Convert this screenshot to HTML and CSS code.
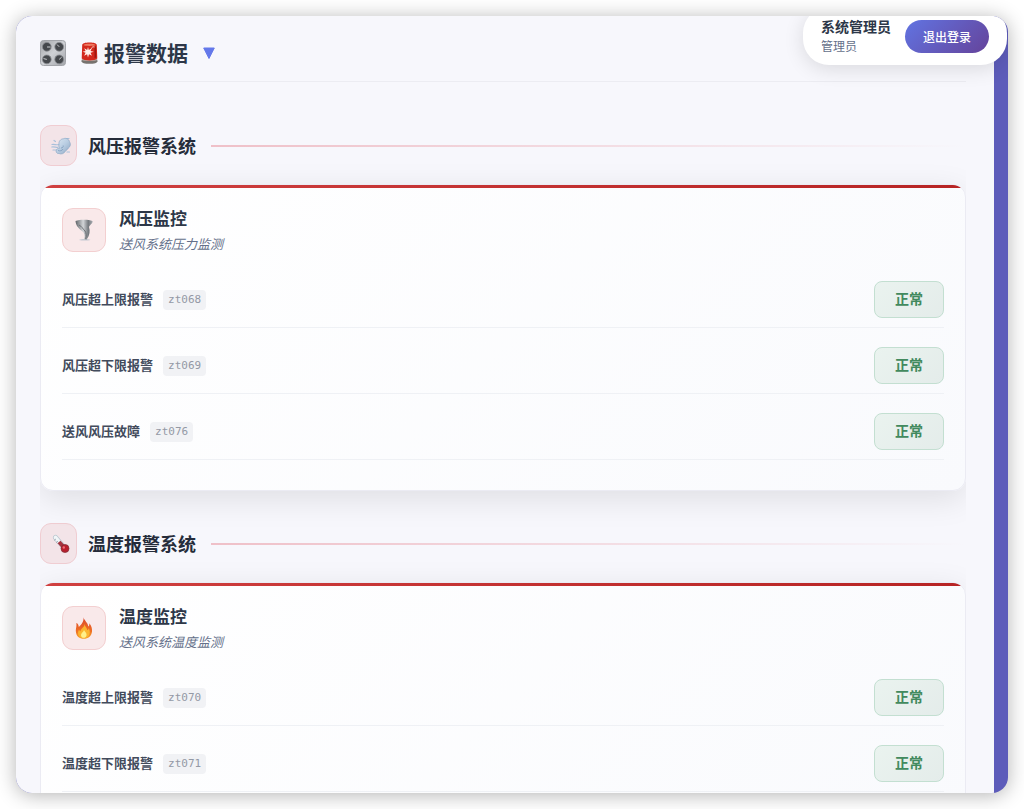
FILE: index.html
```html
<!DOCTYPE html>
<html lang="zh-CN">
<head>
  <meta charset="UTF-8" />
  <meta name="viewport" content="width=device-width, initial-scale=1" />
  <title>报警数据</title>
  <link rel="stylesheet" href="styles.css">
</head>
<body>

  <div class="window">

    <!-- 用户信息 -->
    <div class="user-bar">
      <div class="user-text">
        <span class="user-name">系统管理员</span>
        <span class="user-role">管理员</span>
      </div>
      <button class="logout-btn" type="button">退出登录</button>
    </div>

    <main class="panel">
      <!-- 页面标题 -->
      <header class="page-header">
        <svg class="icon-knobs" viewBox="0 0 26 26" aria-hidden="true">
          <defs>
            <linearGradient id="plate" x1="0" y1="0" x2="1" y2="1">
              <stop offset="0" stop-color="#a3a5a8" />
              <stop offset="0.5" stop-color="#cfd1d5" />
              <stop offset="1" stop-color="#a2a4a9" />
            </linearGradient>
          </defs>
          <rect x="0.5" y="0.5" width="25" height="25" rx="3" fill="url(#plate)" stroke="#a3a5aa" />
          <g fill="#45484c" stroke="#8a8d92" stroke-width="0.8">
            <circle cx="6.800" cy="6.800" r="4.400" />
            <circle cx="19.200" cy="6.800" r="4.400" />
            <circle cx="6.800" cy="19.400" r="4.400" />
            <circle cx="19.200" cy="19.400" r="4.400" />
          </g>
          <path d="M7 7h3.500M19.200 6.800l-2.200-2.300M6.800 19.400l-3.300-.8M19.200 19.400l2.500-2.300" stroke="#c9cbce" stroke-width="1" />
        </svg>
        <h1 class="page-title">
          <svg class="icon-siren" viewBox="0 0 17 22" aria-hidden="true">
            <path d="M1 17h15l.6 2.200c0 1.600-3.600 2.600-8.100 2.600S.4 20.800.4 19.200z" fill="#77736f" />
            <path d="M1 17h15v1c-1.500 1.400-13.500 1.400-15 0z" fill="#b9aaa4" />
            <path d="M1.200 3C1.200 1.200 4 .4 8.500.4s7.300.8 7.300 2.600l.5 13.500c-1.800 2.600-13.800 2.600-15.600 0z" fill="#d3281c" />
            <path d="M2.500 3c1-1.600 11-1.600 12 0-1 1.200-11 1.200-12 0z" fill="#ee7a62" />
            <path d="M13.500 5v11l1.800-.6L15 4z" fill="#9f160f" />
            <path d="M7 5l.8 3L11 6 9.500 9l3.300.8-3.300 1 1.500 3-3-1.500-1 3.200-.9-3.200-3 1.500 1.500-3-3-1 3-.9L3.200 6.200l3 1.800z" fill="#fff0ea" />
            <path d="M10.500 6.500c.3-1.500 1.500-2 3-1.500" fill="none" stroke="#ffd9cc" stroke-width="0.9" />
          </svg>
          <span class="title-text">报警数据</span>
        </h1>
        <button class="toggle-btn" type="button" aria-label="展开">
          <svg viewBox="0 0 12 12" aria-hidden="true"><path d="M.7 1h10.600L6 11.500z" fill="#6478ea" stroke="#6478ea" stroke-linejoin="round" /></svg>
        </button>
      </header>

      <div class="alarm-list">

        <!-- 风压报警系统 -->
        <section class="alarm-section">
          <div class="section-header">
            <div class="section-icon">
              <svg viewBox="0 0 20 20" aria-hidden="true">
                <defs>
                  <linearGradient id="puff" x1="0" y1="0" x2="1" y2="1">
                    <stop offset="0" stop-color="#dce8f3" />
                    <stop offset="0.5" stop-color="#b9cde2" />
                    <stop offset="1" stop-color="#8ba4c0" />
                  </linearGradient>
                </defs>
                <path d="M1 8.500c2-.6 4 .6 6.500.2M.8 11c2.500-.4 4 .5 6 .4M3 4.500l1.500 1M2 14h3M15 2.500h3M16 16h2.500" fill="none" stroke="#a9c0da" stroke-width="1.200" stroke-linecap="round" />
                <path d="M8 8.500c-.5-3 1.500-5.500 4.500-5.800 2.500-1 5.500.3 6 3 1.500 2 1 5-1 6.200-.8 1.600-2.500 2.200-3.300 3.600-1.400 2.300-4.200 3-6.200 2-2.500.3-3.600-2-2.500-4 .5-1 2-.8 3.200-1.200-1-1.200-1-2.500-.7-3.800z" fill="url(#puff)" stroke="#8ea9c6" stroke-width="0.700" />
                <path d="M10 12c1.500 0 2.500-1 2.200-2.500M7 14.500c2 .8 4 .2 5-1.500" fill="none" stroke="#7e9abb" stroke-width="0.800" />
              </svg>
            </div>
            <h2 class="section-title">风压报警系统</h2>
            <div class="section-line"></div>
          </div>

          <article class="card">
            <div class="card-header">
              <div class="card-icon">
                <svg viewBox="0 0 22 22" aria-hidden="true">
                  <defs>
                    <linearGradient id="funnel" x1="0" y1="0" x2="1" y2="0">
                      <stop offset="0" stop-color="#5f6468" />
                      <stop offset="0.45" stop-color="#d2d5d8" />
                      <stop offset="0.75" stop-color="#74797e" />
                      <stop offset="1" stop-color="#a7abb0" />
                    </linearGradient>
                  </defs>
                  <path d="M6 21c2.500-1.400 9-1.400 11.500 0-3 .7-8.500.7-11.500 0z" fill="#c5c9d2" />
                  <path d="M2.500 2c4-1.500 13-1.600 17 0 .5 2.800-2.700 3.500-3.500 6 1.500 4 .8 8-2.300 12.500-1.200.4-2 .2-2.600-.2 1.300-3.800.4-6.300-2.100-8.300C5.500 9.300 2.800 6.500 2.500 2z" fill="url(#funnel)" />
                  <path d="M6 6c3 1.500 3.500 3.500 6 6 1.400 2 1.500 5 .7 8" fill="none" stroke="#65696e" stroke-width="0.9" />
                </svg>
              </div>
              <div class="card-heading">
                <h3 class="card-title">风压监控</h3>
                <p class="card-subtitle">送风系统压力监测</p>
              </div>
            </div>
            <div class="alarm-row">
              <div class="alarm-label"><span class="alarm-name">风压超上限报警</span><code class="alarm-code">zt068</code></div>
              <span class="status">正常</span>
            </div>
            <div class="alarm-row">
              <div class="alarm-label"><span class="alarm-name">风压超下限报警</span><code class="alarm-code">zt069</code></div>
              <span class="status">正常</span>
            </div>
            <div class="alarm-row">
              <div class="alarm-label"><span class="alarm-name">送风风压故障</span><code class="alarm-code">zt076</code></div>
              <span class="status">正常</span>
            </div>
          </article>
        </section>

        <!-- 温度报警系统 -->
        <section class="alarm-section">
          <div class="section-header">
            <div class="section-icon">
              <svg viewBox="0 0 20 20" aria-hidden="true">
                <path d="M4.500 3.500L13.500 14" stroke="#b9c6cf" stroke-width="5" stroke-linecap="round" />
                <path d="M4.500 3.500L9 9" stroke="#f1f6f8" stroke-width="3.600" stroke-linecap="round" />
                <path d="M8 8l6 6.500" stroke="#a53540" stroke-width="4" />
                <path d="M3 6.500l2-1.600M5 8.700l2-1.600" stroke="#8997a1" stroke-width="0.7" />
                <circle cx="14" cy="14.500" r="4" fill="#b81f2d" stroke="#7d3038" stroke-width="0.7" />
                <circle cx="12.800" cy="13.500" r="1.200" fill="#f06d75" />
              </svg>
            </div>
            <h2 class="section-title">温度报警系统</h2>
            <div class="section-line"></div>
          </div>

          <article class="card">
            <div class="card-header">
              <div class="card-icon">
                <svg viewBox="0 0 22 22" aria-hidden="true">
                  <defs>
                    <linearGradient id="flame" x1="0" y1="0" x2="0" y2="1">
                      <stop offset="0" stop-color="#d9482c" />
                      <stop offset="0.6" stop-color="#ee6b25" />
                      <stop offset="1" stop-color="#f6a52a" />
                    </linearGradient>
                  </defs>
                  <path d="M10.500.3c.6 3.200 4.500 5.400 4.800 9.200.9-.6 1.200-2 1-3.300 2.300 2.400 2.900 5.200 2.700 8.500-.6 4.500-3.800 7-8.200 7s-7.600-2.500-7.900-7c-.3-3.500 1-4.800.4-8.700 1.600.6 2.400 2.200 2.500 4C8.500 7.500 11 4.500 10.500.3z" fill="url(#flame)" />
                  <path d="M11.500 7c.3 2.500 2.800 4 2.800 6.300.8-.4 1.300-1 1.500-2 1.800 3.500 1.700 9.500-4.800 9.800-6 0-7-5-5-8.600.3 1 .8 1.400 1.500 1.700C8 11 11.500 10.500 11.500 7z" fill="#fbb52f" />
                  <path d="M11 13c.3 1.600 2.600 2.500 2.600 4.700 0 2-1.300 3.100-2.800 3.100S8 19.800 8 17.900c0-1.900 2.500-2.600 3-4.900z" fill="#fff08a" />
                </svg>
              </div>
              <div class="card-heading">
                <h3 class="card-title">温度监控</h3>
                <p class="card-subtitle">送风系统温度监测</p>
              </div>
            </div>
            <div class="alarm-row">
              <div class="alarm-label"><span class="alarm-name">温度超上限报警</span><code class="alarm-code">zt070</code></div>
              <span class="status">正常</span>
            </div>
            <div class="alarm-row">
              <div class="alarm-label"><span class="alarm-name">温度超下限报警</span><code class="alarm-code">zt071</code></div>
              <span class="status">正常</span>
            </div>
          </article>
        </section>

      </div>
    </main>
  </div>

</body>
</html>
```
FILE: styles.css
```css
* {
  box-sizing: border-box;
}

body {
  margin: 0;
  padding: 16px;
  height: 100vh;
  background-color: #ffffff;
  font-family: "Noto Sans CJK SC", sans-serif;
  color: #2d3748;
  overflow: hidden;
}

h1, h2, h3, p {
  margin: 0;
}

svg {
  display: block;
}

/* 外层窗口 */
.window {
  position: relative;
  height: 100%;
  padding-right: 14px;
  border-radius: 16px;
  background-color: #5d5cba;
  box-shadow: 0 2px 20px rgba(0, 0, 0, 0.3);
  overflow: hidden;
}

.panel {
  display: flex;
  flex-direction: column;
  height: 100%;
  padding: 24px 28px 0 24px;
  background-color: #f7f7fc;
}

/* 用户信息 */
.user-bar {
  position: absolute;
  top: -9px;
  right: 1px;
  z-index: 10;
  display: flex;
  align-items: center;
  gap: 14px;
  padding: 11px 18px;
  border-radius: 26px;
  background-color: #ffffff;
  box-shadow: 0 4px 20px rgba(0, 0, 0, 0.12);
}

.user-text {
  display: flex;
  flex-direction: column;
  gap: 3px;
}

.user-name {
  font-size: 14px;
  line-height: 17px;
  font-weight: 700;
}

.user-role {
  font-size: 12px;
  line-height: 16px;
  color: #64708a;
}

.logout-btn {
  padding: 0 18px;
  border: none;
  border-radius: 17px;
  background: linear-gradient(135deg, #6174e2 0%, #65439a 100%);
  color: #ffffff;
  font-family: inherit;
  font-size: 12px;
  line-height: 33px;
  font-weight: 500;
  cursor: pointer;
}

/* 页面标题 */
.page-header {
  display: flex;
  align-items: center;
  gap: 15px;
  padding-bottom: 15px;
  border-bottom: 1px solid #ececf2;
}

.icon-knobs {
  width: 26px;
  height: 26px;
}

.page-title {
  display: flex;
  align-items: center;
  gap: 6px;
  font-size: 21px;
  line-height: 24px;
  font-weight: 700;
}

.title-text {
  padding-bottom: 2px;
}

.icon-siren {
  width: 17px;
  height: 22px;
}

.toggle-btn {
  padding: 0;
  border: none;
  background: none;
  cursor: pointer;
}

.toggle-btn svg {
  width: 12px;
  height: 12px;
}

/* 报警列表 */
.alarm-list {
  flex: 1;
  min-height: 0;
  padding-top: 43px;
  overflow-y: auto;
  scrollbar-width: none;
}

.alarm-section {
  margin-bottom: 32px;
}

.section-header {
  display: flex;
  align-items: center;
  gap: 11px;
  margin-bottom: 18px;
}

.section-icon {
  display: flex;
  align-items: center;
  padding: 10px 5px 9px 10px;
  border: 1px solid #f0cdd2;
  border-radius: 11px;
  background-color: #f3e4e8;
}

.section-icon svg {
  width: 20px;
  height: 20px;
}

.section-title {
  padding-bottom: 2px;
  font-size: 18px;
  line-height: 24px;
  font-weight: 700;
  color: #252c3a;
}

.section-line {
  flex: 1;
  height: 2px;
  margin-left: 4px;
  background: linear-gradient(90deg, #efc0c8, rgba(239, 192, 200, 0));
}

.card {
  position: relative;
  padding: 23px 21px 20px;
  border: 1px solid #ebebf3;
  border-radius: 13px;
  background: linear-gradient(135deg, #ffffff 0%, #f9fafd 100%);
  box-shadow: 0 8px 32px rgba(0, 0, 0, 0.1);
  overflow: hidden;
}

/* 卡片顶部红条 */
.card::before {
  content: "";
  position: absolute;
  top: 0;
  left: 0;
  right: 0;
  height: 3px;
  background: linear-gradient(90deg, #d04040, #b72424);
}

.card-header {
  display: flex;
  align-items: center;
  gap: 13px;
  margin-bottom: 20px;
}

.card-icon {
  display: flex;
  align-items: center;
  justify-content: center;
  width: 44px;
  height: 44px;
  border: 1px solid #f3cfd0;
  border-radius: 11px;
  background-color: #f9e9ea;
}

.card-icon svg {
  width: 22px;
  height: 22px;
}

.card-heading {
  display: flex;
  flex-direction: column;
  gap: 8px;
}

.card-title {
  font-size: 17px;
  line-height: 20px;
  font-weight: 700;
}

.card-subtitle {
  font-size: 13px;
  line-height: 16px;
  font-style: italic;
  color: #64708a;
}

.alarm-row {
  display: flex;
  align-items: center;
  justify-content: space-between;
  padding: 9px 0;
  margin-bottom: 10px;
  border-bottom: 1px solid #eff1f5;
}

.alarm-label {
  display: flex;
  align-items: center;
  gap: 10px;
  font-size: 13px;
  line-height: 20px;
}

.alarm-name {
  padding-bottom: 2px;
  font-weight: 700;
  color: #424b5c;
}

.alarm-code {
  padding: 0 5px;
  border-radius: 4px;
  background-color: #f1f2f5;
  font-family: "DejaVu Sans Mono", monospace;
  font-size: 11px;
  color: #9499a5;
}

.status {
  padding: 0 20px 2px;
  border: 1px solid #c3dfd1;
  border-radius: 8px;
  background: linear-gradient(135deg, #eaf3ef, #e4ecea);
  font-size: 14px;
  line-height: 33px;
  font-weight: 700;
  color: #428a5e;
}
```
